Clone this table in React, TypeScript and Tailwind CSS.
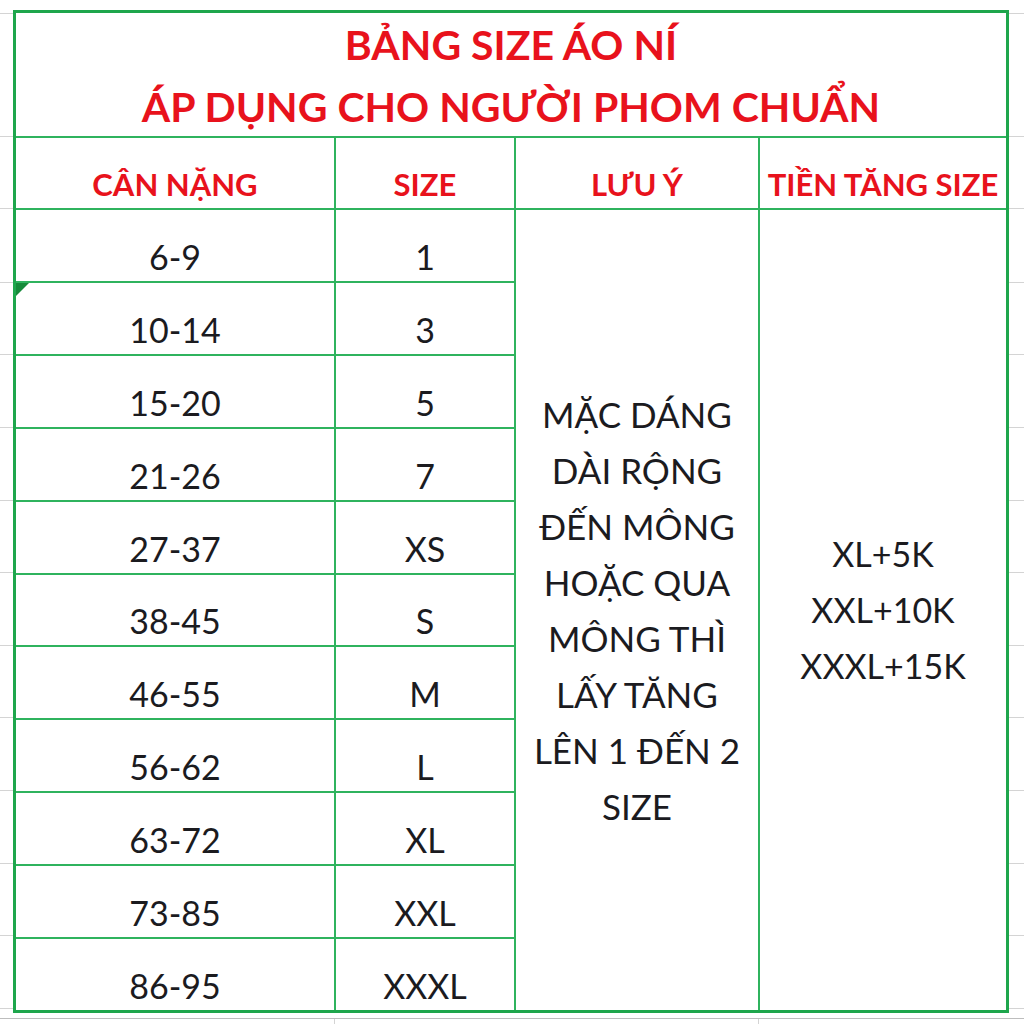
import React from 'react';

const rows = [
  ['6-9', '1'],
  ['10-14', '3'],
  ['15-20', '5'],
  ['21-26', '7'],
  ['27-37', 'XS'],
  ['38-45', 'S'],
  ['46-55', 'M'],
  ['56-62', 'L'],
  ['63-72', 'XL'],
  ['73-85', 'XXL'],
  ['86-95', 'XXXL'],
];

const note = ['MẶC DÁNG', 'DÀI RỘNG', 'ĐẾN MÔNG', 'HOẶC QUA', 'MÔNG THÌ', 'LẤY TĂNG', 'LÊN 1 ĐẾN 2', 'SIZE'];
const extra = ['XL+5K', 'XXL+10K', 'XXXL+15K'];

function Gutter() {
  // faint excel gridline stubs beside the table
  return (
    <div className="grid h-full grid-rows-[123px_2px_70px_2px_repeat(11,1fr)]">
      <div className="border-t border-[#d4d4d4]" />
      <div className="border-t border-[#d4d4d4]" />
      <div />
      <div className="border-t border-[#d4d4d4]" />
      {rows.map((_, i) => (
        <div key={i} className="border-b border-[#d4d4d4]" />
      ))}
    </div>
  );
}

export default function App() {
  return (
    <div className="w-[1024px] h-[1024px] bg-white overflow-hidden font-['Lato','Liberation_Sans',sans-serif]">
      <div className="h-[10px]" />
      <div className="flex h-[1003px]">
        <div className="w-[13px] pt-[3px]">
          <div className="h-[996px]">
            <Gutter />
          </div>
        </div>

        {/* Table */}
        <div className="w-[996px] border-[3px] border-[#1ea64c] bg-[#2fb35e]">
          <div className="relative grid h-full grid-cols-[318px_178px_242px_246px] grid-rows-[123px_70px_repeat(11,1fr)] gap-[2px]">
            {/* Title */}
            <div className="col-span-4 flex flex-col items-center justify-center bg-white text-[#e8121c] font-bold text-[41px] leading-[62px] pt-[2px] whitespace-nowrap">
              <div>BẢNG SIZE ÁO NÍ</div>
              <div>ÁP DỤNG CHO NGƯỜI PHOM CHUẨN</div>
            </div>

            {/* Header */}
            {['CÂN NẶNG', 'SIZE', 'LƯU Ý', 'TIỀN TĂNG SIZE'].map((h) => (
              <div
                key={h}
                className="flex items-end justify-center bg-white pb-[8px] text-[31px] font-bold leading-none text-[#e8121c] whitespace-nowrap"
              >
                {h}
              </div>
            ))}

            {/* Data rows */}
            {rows.map(([w, s], i) => (
              <React.Fragment key={w}>
                <div
                  className="relative flex items-end justify-center bg-white pb-[7px] text-[34px] leading-none text-[#1b1b1f]"
                  style={{ gridRow: i + 3, gridColumn: 1 }}
                >
                  {i === 1 && (
                    <div className="absolute left-0 top-0 h-0 w-0 border-t-[13px] border-r-[13px] border-t-[#168a3a] border-r-transparent" />
                  )}
                  {w}
                </div>
                <div
                  className="flex items-end justify-center bg-white pb-[7px] text-[34px] leading-none text-[#1b1b1f]"
                  style={{ gridRow: i + 3, gridColumn: 2 }}
                >
                  {s}
                </div>
              </React.Fragment>
            ))}

            <div className="col-start-3 row-start-3 row-span-11 flex flex-col items-center justify-center bg-white text-[35px] leading-[56px] text-[#1b1b1f] whitespace-nowrap">
              {note.map((n) => (
                <div key={n}>{n}</div>
              ))}
            </div>

            <div className="col-start-4 row-start-3 row-span-11 flex flex-col items-center justify-center bg-white text-[34px] leading-[56px] text-[#1b1b1f] whitespace-nowrap">
              {extra.map((n) => (
                <div key={n}>{n}</div>
              ))}
            </div>
          </div>
        </div>

        <div className="w-[15px] pt-[3px]">
          <div className="h-[996px]">
            <Gutter />
          </div>
        </div>
      </div>
      <div className="h-[5px]" />
      <div className="flex h-[6px] border-t border-[#bdbdbd]">
        <div className="w-[335px] border-r border-[#d4d4d4]" />
        <div className="w-[424px] border-r border-[#d4d4d4]" />
      </div>
    </div>
  );
}
